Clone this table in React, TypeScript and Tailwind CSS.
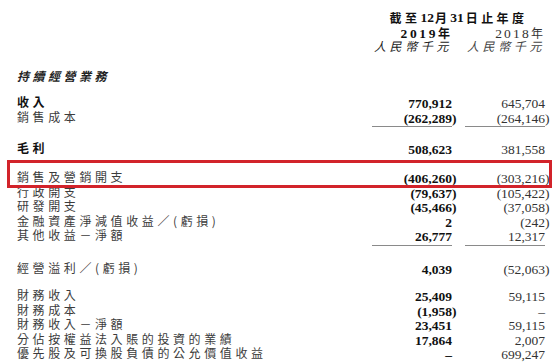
const cjk = "font-['Noto_Sans_CJK_TC','Noto_Sans_CJK_SC',sans-serif]";
const serif = "font-['Liberation_Serif','Noto_Sans_CJK_TC',serif]";

interface LineItem {
  label: string;
  cur: string;
  prev: string;
  strong?: boolean;
}

function Num({ value, bold }: { value: string; bold?: boolean }) {
  const neg = value.startsWith("(");
  return (
    <span
      className={`${serif} text-[13.5px] leading-none ${bold ? "font-bold text-[#111]" : "text-[#333]"}`}
    >
      {neg ? (
        <>
          {value.slice(0, -1)}
          <span className="mr-[-4.5px]">)</span>
        </>
      ) : (
        value
      )}
    </span>
  );
}

function Row({ item, className = "" }: { item: LineItem; className?: string }) {
  return (
    <div className={`flex h-[14.5px] items-center ${className}`}>
      <div
        className={`${cjk} w-[372px] pl-[17px] text-[12px] leading-none tracking-[3.6px] ${
          item.strong ? "font-bold text-[#111]" : "text-[#3c3c3c]"
        }`}
      >
        {item.label}
      </div>
      <div className="w-[80px] text-right">
        <Num value={item.cur} bold />
      </div>
      <div className="ml-[13px] w-[80px] text-right">
        <Num value={item.prev} />
      </div>
    </div>
  );
}

function Rule({ className = "" }: { className?: string }) {
  return (
    <div className={`flex ${className}`}>
      <div className="ml-[372px] h-px w-[80px] bg-[#8a8a8a]" />
      <div className="ml-[13px] h-px w-[80px] bg-[#8a8a8a]" />
    </div>
  );
}

const top: LineItem[] = [
  { label: "收入", cur: "770,912", prev: "645,704", strong: true },
  { label: "銷售成本", cur: "(262,289)", prev: "(264,146)" },
];

const expenses: LineItem[] = [
  { label: "銷售及營銷開支", cur: "(406,260)", prev: "(303,216)" },
  { label: "行政開支", cur: "(79,637)", prev: "(105,422)" },
  { label: "研發開支", cur: "(45,466)", prev: "(37,058)" },
  { label: "金融資產淨減值收益／(虧損)", cur: "2", prev: "(242)" },
  { label: "其他收益－淨額", cur: "26,777", prev: "12,317" },
];

const finance: LineItem[] = [
  { label: "財務收入", cur: "25,409", prev: "59,115" },
  { label: "財務成本", cur: "(1,958)", prev: "–" },
  { label: "財務收入－淨額", cur: "23,451", prev: "59,115" },
  { label: "分佔按權益法入賬的投資的業績", cur: "17,864", prev: "2,007" },
  { label: "優先股及可換股負債的公允價值收益", cur: "–", prev: "699,247" },
];

export default function App() {
  return (
    <div className="relative h-[362px] w-[560px] overflow-hidden bg-white">
      <div className="ml-[372px] w-[173px]">
        <div className="mt-[11px] flex h-[14px] items-center justify-center font-bold leading-none text-[#111]">
          <span className={`${cjk} text-[12px] tracking-[3.4px]`}>截至</span>
          <span className={`${serif} text-[13.5px]`}>12</span>
          <span className={`${cjk} pl-[1px] text-[12px] tracking-[3.4px]`}>月</span>
          <span className={`${serif} text-[13.5px]`}>31</span>
          <span className={`${cjk} pl-[2px] text-[12px] tracking-[3.4px]`}>日止年度</span>
        </div>
        <div className="flex h-[14px] items-center leading-none">
          <div className="w-[80px] text-right font-bold text-[#111]">
            <span className={`${serif} text-[13.5px] tracking-[2.6px]`}>2019</span>
            <span className={`${cjk} pr-[2px] text-[12px]`}>年</span>
          </div>
          <div className="ml-[13px] w-[80px] text-right text-[#333]">
            <span className={`${serif} text-[13.5px] tracking-[2.2px]`}>2018</span>
            <span className={`${cjk} pr-[2px] text-[12px]`}>年</span>
          </div>
        </div>
        <div className="flex h-[14px] items-center leading-none">
          <div className={`${cjk} w-[80px] text-right text-[12px] italic tracking-[3.6px] text-[#222]`}>
            人民幣千元
          </div>
          <div className={`${cjk} ml-[13px] w-[80px] text-right text-[12px] italic tracking-[3.6px] text-[#444]`}>
            人民幣千元
          </div>
        </div>
      </div>

      <div className={`${cjk} mt-[16px] flex h-[14px] items-center pl-[17px] text-[12px] font-bold italic leading-none tracking-[3.5px] text-[#222]`}>
        持續經營業務
      </div>

      {top.map((item, i) => (
        <Row key={item.label} item={item} className={i === 0 ? "mt-[12px]" : ""} />
      ))}
      <Rule className="mt-[2px]" />

      <Row className="mt-[14px]" item={{ label: "毛利", cur: "508,623", prev: "381,558", strong: true }} />

      {expenses.map((item, i) => (
        <Row key={item.label} item={item} className={i === 0 ? "mt-[14.5px]" : ""} />
      ))}
      <Rule className="mt-[2.5px]" />

      <Row className="mt-[14.75px]" item={{ label: "經營溢利／(虧損)", cur: "4,039", prev: "(52,063)" }} />

      {finance.map((item, i) => (
        <Row key={item.label} item={item} className={i === 0 ? "mt-[12.5px]" : ""} />
      ))}

      <div className="absolute left-[7px] top-[160px] h-[28px] w-[545px] border-[3.5px] border-[#d2232a]" />
    </div>
  );
}
